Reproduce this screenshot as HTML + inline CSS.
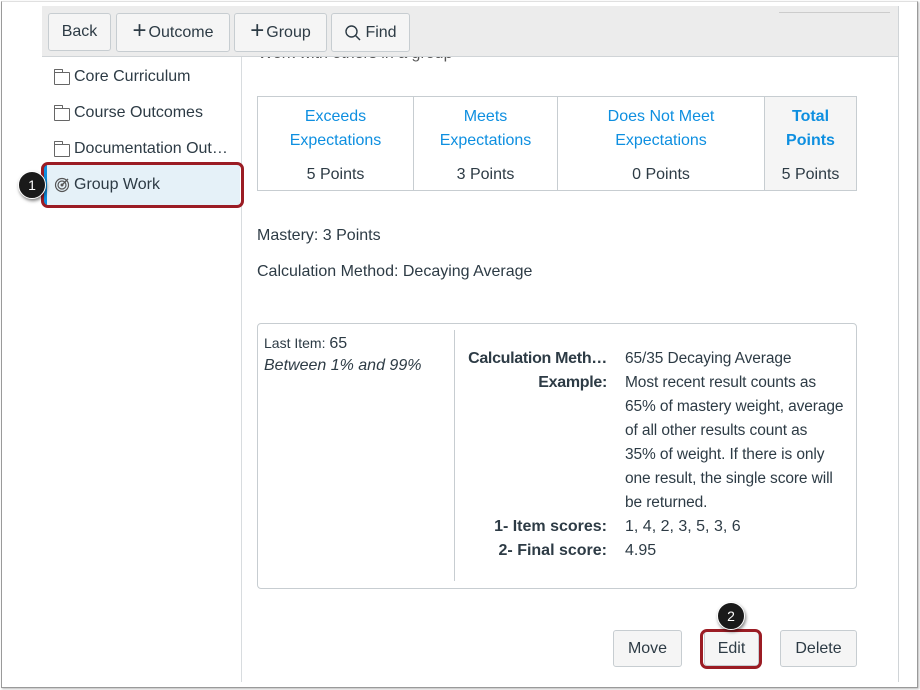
<!DOCTYPE html>
<html><head><style>
*{box-sizing:border-box;margin:0;padding:0}
body{width:920px;height:690px;background:#fff;font-family:"Liberation Sans",sans-serif;color:#2d3b45;position:relative;overflow:hidden;font-size:15px}
.abs{position:absolute}
.frame{left:1px;top:1px;width:917px;height:687px;border:1px solid #9a9a9a;border-top-color:#e0e0e0;box-shadow:1px 1px 2px #bbb}
.tb{left:42px;top:6px;width:857px;height:51px;background:#ececec;border-bottom:1px solid #d0d4d7;border-right:1px solid #d0d4d7;z-index:2}
.btn{position:absolute;background:#f5f5f5;border:1px solid #c7cdd1;border-radius:3px;font-size:16px;color:#2d3b45;display:flex;align-items:center;justify-content:center;z-index:3}
.side{left:241px;top:57px;width:1px;height:625px;background:#d8dcdf}
.rline{left:898px;top:57px;width:1px;height:625px;background:#d0d4d7}
.nav{position:absolute;left:54px;font-size:16px;color:#2d3b45;display:flex;align-items:center;gap:4px}
.fold{width:16px;height:13px;border:1.3px solid #666;border-radius:1px;position:relative;margin-top:2px}
.fold:before{content:"";position:absolute;left:-1px;top:-4px;width:7px;height:3px;border:1.3px solid #666;border-bottom:none;border-radius:1px 1px 0 0}
table{border-collapse:collapse;position:absolute;left:257px;top:96px;width:600px}
td{border:1px solid #c7cdd1;text-align:center;vertical-align:top;font-size:16px;padding-top:8px;height:94px;line-height:24px}
td a{color:#0e8fe0;display:block;height:58px}
.circ{position:absolute;width:28px;height:28px;border-radius:50%;background:#1a1a1a;color:#fff;font-size:14px;display:flex;align-items:center;justify-content:center;box-shadow:1px 2px 3px rgba(0,0,0,.5);border:1px solid #fff;z-index:5}
.red{position:absolute;border:3px solid #9b1c24;border-radius:7px;z-index:4}
.row{position:absolute;font-size:16px;line-height:24px;white-space:nowrap}
</style></head><body>
<div class="abs frame"></div>
<div class="abs tb"></div>
<div class="abs" style="left:779px;top:12px;width:111px;height:1px;background:#ccc;z-index:3"></div>
<div class="btn" style="left:48px;top:13px;width:63px;height:38px">Back</div>
<div class="btn" style="left:116px;top:13px;width:114px;height:39px"><span style="font-size:24px;font-weight:200;margin-right:2px;margin-top:-3px">+</span>Outcome</div>
<div class="btn" style="left:234px;top:13px;width:93px;height:39px"><span style="font-size:24px;font-weight:200;margin-right:2px;margin-top:-3px">+</span>Group</div>
<div class="btn" style="left:331px;top:13px;width:79px;height:39px"><svg width="18" height="18" viewBox="0 0 18 18" style="margin-right:3px"><circle cx="7.5" cy="7.5" r="5.5" fill="none" stroke="#2d3b45" stroke-width="1.4"/><path d="M11.5 11.5L16 16" stroke="#2d3b45" stroke-width="1.5"/></svg>Find</div>
<div class="abs side"></div>
<div class="abs rline"></div>
<div class="abs" style="left:258px;top:44px;font-size:16px;color:#555;line-height:20px;z-index:1">Work with others in a group</div>
<div class="nav" style="top:68px"><span class="fold"></span>Core Curriculum</div>
<div class="nav" style="top:104px"><span class="fold"></span>Course Outcomes</div>
<div class="nav" style="top:140px"><span class="fold"></span>Documentation Out…</div>
<div class="abs" style="left:44px;top:164px;width:196px;height:41px;background:#e5f1f8;border-left:3px solid #0e8fe0"></div>
<div class="nav" style="top:176px"><svg width="16" height="16" viewBox="0 0 16 16"><circle cx="8" cy="8" r="6.5" fill="none" stroke="#555" stroke-width="1.2"/><circle cx="8" cy="8" r="4" fill="none" stroke="#555" stroke-width="1.2"/><circle cx="8" cy="8" r="1.5" fill="#555"/><path d="M8 8L14 2" stroke="#555" stroke-width="1.3"/></svg>Group Work</div>
<div class="red" style="left:41px;top:162px;width:203px;height:46px"></div>
<div class="circ" style="left:18px;top:171px">1</div>
<table><tr>
<td style="width:156px"><a>Exceeds<br>Expectations</a>5 Points</td>
<td style="width:144px"><a>Meets<br>Expectations</a>3 Points</td>
<td style="width:207px"><a>Does Not Meet<br>Expectations</a>0 Points</td>
<td style="background:#f5f5f5"><a style="font-weight:bold">Total<br>Points</a>5 Points</td>
</tr></table>
<div class="row" style="left:257px;top:224px">Mastery: 3 Points</div>
<div class="row" style="left:257px;top:260px">Calculation Method: Decaying Average</div>
<div class="abs" style="left:257px;top:323px;width:600px;height:266px;border:1px solid #c7cdd1;border-radius:4px"></div>
<div class="abs" style="left:454px;top:330px;width:1px;height:251px;background:#c7cdd1"></div>
<div class="abs" style="left:264px;top:334px;font-size:14px;line-height:18px">Last Item: <span style="font-size:16px">65</span></div>
<div class="abs" style="left:264px;top:357px;font-size:16px;font-style:italic">Between 1% and 99%</div>
<div class="row" style="left:454px;top:347px;width:153px;text-align:right;font-weight:bold;letter-spacing:-0.3px">Calculation Meth…<br>Example:</div>
<div class="row" style="left:625px;top:347px;font-size:15.5px;letter-spacing:-0.1px">65/35 Decaying Average<br>Most recent result counts as<br>65% of mastery weight, average<br>of all other results count as<br>35% of weight. If there is only<br>one result, the single score will<br>be returned.</div>
<div class="row" style="left:454px;top:515px;width:153px;text-align:right;font-weight:bold">1- Item scores:<br>2- Final score:</div>
<div class="row" style="left:625px;top:515px">1, 4, 2, 3, 5, 3, 6<br>4.95</div>
<div class="btn" style="left:613px;top:630px;width:69px;height:37px">Move</div>
<div class="btn" style="left:704px;top:631px;width:55px;height:35px">Edit</div>
<div class="red" style="left:700px;top:629px;width:62px;height:40px"></div>
<div class="btn" style="left:780px;top:630px;width:77px;height:37px">Delete</div>
<div class="circ" style="left:717px;top:602px">2</div>
</body></html>
